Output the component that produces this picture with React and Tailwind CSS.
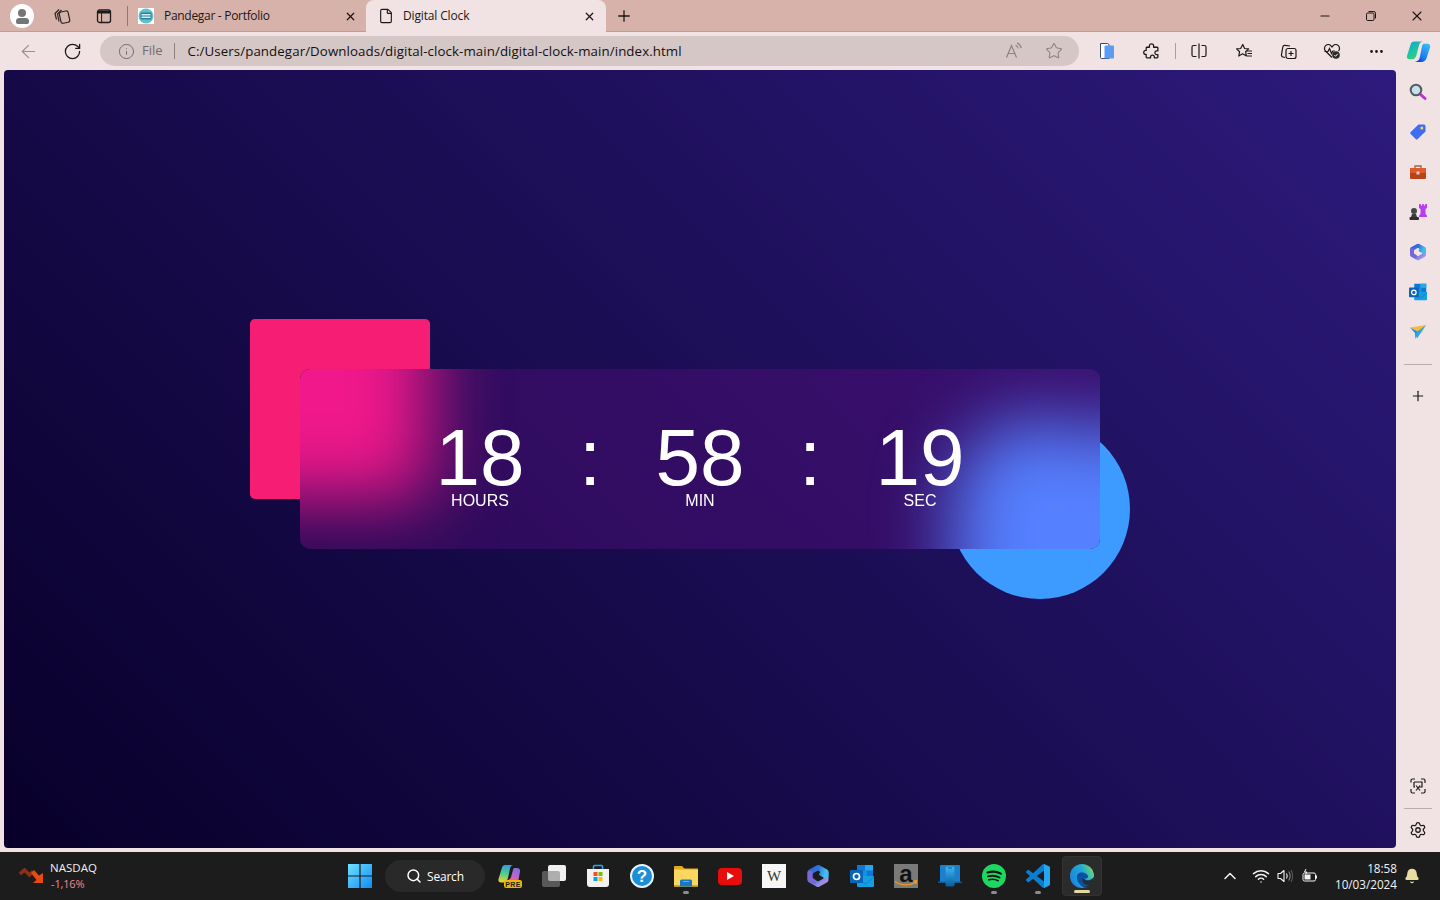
import React from 'react';
import { ArrowLeft, RotateCw, Info, Star, Plus, X, Minus, Search, ChevronUp, Wifi, Bell, File as FileIcon, Settings, MoreHorizontal } from 'lucide-react';

const uiFont = "font-['Open_Sans','Noto_Sans',sans-serif]";
const clockFont = "font-['Liberation_Sans',Arial,sans-serif]";

function Slot({ className = 'w-11 h-11', children }) {
  return <div className={`flex items-center justify-center shrink-0 ${className}`}>{children}</div>;
}

function Workspaces() {
  return (
    <svg width="18" height="18" viewBox="0 0 18 18" fill="none" stroke="#2b2625" strokeWidth="1.2">
      <path d="M3.5 12.5 2 6.5 6 2.5" />
      <path d="M6 14.5 4.5 7 8.5 3" />
      <rect x="7" y="4.5" width="9" height="11.5" rx="2" transform="rotate(-12 11 10)" />
    </svg>
  );
}

function TabActions() {
  return (
    <svg width="16" height="16" viewBox="0 0 16 16" fill="none">
      <rect x="1.5" y="2" width="13" height="12.5" rx="2" stroke="#1c1a1a" strokeWidth="1.3" />
      <path d="M2 3h12v2.5H2z" fill="#1c1a1a" />
      <path d="M5.6 5v9" stroke="#1c1a1a" strokeWidth="1" />
    </svg>
  );
}

function Favicon() {
  return (
    <div className="w-4 h-4 bg-white flex items-center justify-center">
      <svg width="16" height="16" viewBox="0 0 16 16">
        <circle cx="8" cy="8" r="7.5" fill="#5cc3c9" />
        <rect x="2.5" y="4.5" width="11" height="7" rx="1" fill="#2f7f9c" />
        <rect x="3.5" y="6" width="9" height="1.5" fill="#d7eef0" />
        <rect x="3.5" y="8.5" width="9" height="1.5" fill="#d7eef0" />
      </svg>
    </div>
  );
}

function RestoreIcon() {
  return (
    <svg width="10" height="10" viewBox="0 0 10 10" fill="none" stroke="#1b1515" strokeWidth="1">
      <rect x="0.5" y="2" width="7.5" height="7.5" rx="1.2" />
      <path d="M2.5 .5h5.2A1.8 1.8 0 0 1 9.5 2.3V7.5" />
    </svg>
  );
}

function ReadAloud() {
  return (
    <svg width="18" height="18" viewBox="0 0 18 18" fill="none" stroke="#8d8382" strokeWidth="1.2">
      <path d="M1.5 15.5 6.5 3.5l5 12M3.2 11.5h6.6" />
      <path d="M10.5 3.2c1.5.5 2.5 1.8 2.8 3.3M12 1c2.3.8 3.7 2.7 4.2 5" />
    </svg>
  );
}

function WalletIcon() {
  return (
    <svg width="16" height="18" viewBox="0 0 16 18">
      <path d="M1.5 1.5h7l1.5 1V16.5H2.5a1 1 0 0 1-1-1z" fill="#fff" stroke="#3c4a63" strokeWidth="1" />
      <rect x="5.5" y="3.5" width="9.5" height="13" rx="1" fill="#5b9bf3" />
    </svg>
  );
}

function PuzzleIcon() {
  return (
    <svg width="17" height="17" viewBox="0 0 16 16" fill="none" stroke="#1c1818" strokeWidth="1.2" strokeLinejoin="round">
      <path d="M6 2.8a2 2 0 0 1 4 0V4h3.2a.8.8 0 0 1 .8.8v2.7h-1.1a1.6 1.6 0 0 0 0 3.4H14v2.3a.8.8 0 0 1-.8.8h-2.5v-.8a1.8 1.8 0 0 0-3.6 0v.8H3.8a.8.8 0 0 1-.8-.8v-2.4h-.4a1.9 1.9 0 0 1 0-3.8H3V4.8a.8.8 0 0 1 .8-.8H6z" />
    </svg>
  );
}

function SplitIcon() {
  return (
    <svg width="16" height="16" viewBox="0 0 16 16" fill="none" stroke="#1c1818" strokeWidth="1.2">
      <path d="M8 .5v15" />
      <path d="M5.5 2.5h-3A1.5 1.5 0 0 0 1 4v8a1.5 1.5 0 0 0 1.5 1.5h3M10.5 2.5h3A1.5 1.5 0 0 1 15 4v8a1.5 1.5 0 0 1-1.5 1.5h-3" />
    </svg>
  );
}

function FavoritesIcon() {
  return (
    <svg width="17" height="17" viewBox="0 0 17 17" fill="none" stroke="#1c1818" strokeWidth="1.2" strokeLinejoin="round">
      <path d="M6.8 1.5 8.6 5.5l4 .4-3 2.8.8 4.3-3.8-2.2-3.8 2.2.8-4.3-3-2.8 4-.4z" />
      <path d="M11 8h5M11.5 10.5H16M11 13h5" />
    </svg>
  );
}

function CollectionsIcon() {
  return (
    <svg width="17" height="17" viewBox="0 0 17 17" fill="none" stroke="#1c1818" strokeWidth="1.2">
      <path d="M5 14.5 3 14a2 2 0 0 1-1.5-2.4L2.8 4A2 2 0 0 1 5 2.3l5 .7" />
      <rect x="6" y="5.5" width="10" height="10" rx="2" />
      <path d="M11 8v5M8.5 10.5h5" />
    </svg>
  );
}

function HealthIcon() {
  return (
    <svg width="18" height="18" viewBox="0 0 18 18" fill="none">
      <path d="M9 15.5 2.5 9A3.7 3.7 0 0 1 8 3.8L9 5l1-1.2A3.7 3.7 0 0 1 15.5 9" stroke="#1c1818" strokeWidth="1.2" />
      <path d="M1.5 9.5H5l1.5-3 2 5L9.8 9h2" stroke="#1c1818" strokeWidth="1.2" />
      <circle cx="13" cy="13" r="3.8" fill="#2a2a2a" />
      <path d="M11.3 13.1 12.5 14.3 14.8 11.8" stroke="#fff" strokeWidth="1" />
    </svg>
  );
}

function CopilotIcon() {
  return (
    <svg width="25" height="25" viewBox="0 0 24 24">
      <defs>
        <linearGradient id="cpA" x1="0" y1="0" x2="0.6" y2="1">
          <stop offset="0" stopColor="#1f9bd8" />
          <stop offset="0.6" stopColor="#1cc7a0" />
          <stop offset="1" stopColor="#38d070" />
        </linearGradient>
        <linearGradient id="cpB" x1="0.7" y1="0" x2="0.2" y2="1">
          <stop offset="0" stopColor="#35b8f6" />
          <stop offset="0.7" stopColor="#1a78ee" />
          <stop offset="1" stopColor="#1838c8" />
        </linearGradient>
      </defs>
      <path d="M8 2.5h8.500c-2 0-3.500 1.500-4 3.500L10 15.500c-.6 2.500-2.500 4-4.500 4h-2C1.500 19.500.3 18 1 16L4.500 5C5 3.500 6.300 2.500 8 2.500z" fill="url(#cpA)" />
      <path d="M17 4.500h3.500c2 0 3.200 1.500 2.600 3.500L19.500 19c-.6 2-2.500 3-4.500 3H8.500c2 0 3.800-1.500 4.500-3.500L15 9c.4-2 .8-4.500 2-4.500z" fill="url(#cpB)" />
    </svg>
  );
}

function Magnifier() {
  return (
    <svg width="18" height="18" viewBox="0 0 18 18">
      <path d="M10.5 10.5 16 15.5" stroke="#c72fd6" strokeWidth="3" strokeLinecap="round" />
      <circle cx="7" cy="7" r="5.3" fill="#c4dff0" stroke="#55595e" strokeWidth="2" />
    </svg>
  );
}

function TagIcon() {
  return (
    <svg width="18" height="18" viewBox="0 0 18 18">
      <path d="M9.5 1.5H15A1.5 1.5 0 0 1 16.5 3v5.500L8.700 16a1.500 1.500 0 0 1-2.100 0L1.700 11a1.500 1.500 0 0 1 0-2.100z" fill="#3f6cf0" />
      <circle cx="12.8" cy="5" r="1.5" fill="#f1d868" />
    </svg>
  );
}

function ToolboxIcon() {
  return (
    <svg width="18" height="16" viewBox="0 0 18 16">
      <path d="M6 4V2h6v2" fill="none" stroke="#8a6b5b" strokeWidth="1.3" />
      <rect x="1" y="4" width="16" height="11" rx="1.2" fill="#b8431a" />
      <rect x="1" y="4" width="16" height="5" rx="1" fill="#e2592a" />
      <rect x="7.5" y="7.5" width="3" height="3" rx=".5" fill="#d9d4d2" />
    </svg>
  );
}

function ChessIcon() {
  return (
    <svg width="20" height="18" viewBox="0 0 20 18">
      <circle cx="6" cy="8" r="3" fill="#45484b" />
      <path d="M4 11h4l1 3H3z" fill="#3a3c3f" />
      <rect x="1.5" y="14" width="9.5" height="3" rx="1" fill="#2d2f31" />
      <path d="M11 1h1.800v1.500h1.400V1h1.600v1.500h1.400V1H19v4l-1.500 1v5l1.500 1.500V14h-8v-1.500L12.500 11V6L11 5z" fill="#b63df0" />
    </svg>
  );
}

function M365Icon({ size = 18, hole = '#f1e3e3', id = 'm3' }) {
  return (
    <svg width={size} height={size} viewBox="0 0 24 24">
      <defs>
        <linearGradient id={`${id}A`} x1="0.1" y1="0" x2="0.9" y2="1">
          <stop offset="0" stopColor="#2f5fd8" />
          <stop offset="0.45" stopColor="#3d86e0" />
          <stop offset="1" stopColor="#b68ce6" />
        </linearGradient>
        <linearGradient id={`${id}B`} x1="0" y1="0" x2="1" y2="0.3">
          <stop offset="0" stopColor="#2c6bd8" />
          <stop offset="1" stopColor="#42bdec" />
        </linearGradient>
      </defs>
      <path d="M12 3.5 20 8v8l-8 4.500L4 16V8z" fill={hole} stroke={`url(#${id}A)`} strokeWidth="5" strokeLinejoin="round" />
      <path d="M12 3.5 20 8v4l-6-3.500" fill="none" stroke={`url(#${id}B)`} strokeWidth="5" strokeLinejoin="round" />
      <path d="M4 9v6l4 3" fill="none" stroke="#7a66d8" strokeWidth="5" strokeLinejoin="round" strokeLinecap="round" />
    </svg>
  );
}

function OutlookIcon({ size = 18 }) {
  return (
    <svg width={size} height={size} viewBox="0 0 24 24">
      <rect x="7" y="1" width="16" height="11" fill="#0f78d4" />
      <rect x="15" y="1" width="8" height="5.5" fill="#28a8ea" />
      <rect x="11" y="6.5" width="6" height="5.5" fill="#1a8fe0" />
      <path d="M7 12h17v10a1 1 0 0 1-1 1H8a1 1 0 0 1-1-1z" fill="#14a0e0" />
      <path d="M7 14l8.500 5L24 12v2l-8.500 7L7 16z" fill="#0f78d4" opacity=".5" />
      <rect x="0" y="6" width="13" height="13" rx="1" fill="#0a64b8" />
      <circle cx="6.5" cy="12.5" r="3" fill="none" stroke="#fff" strokeWidth="1.7" />
    </svg>
  );
}

function SendIcon() {
  return (
    <svg width="18" height="16" viewBox="0 0 18 16">
      <path d="M1 3.500 17 1 9.500 8z" fill="#f4bb3e" />
      <path d="M17 1 9.500 8 13 9.500z" fill="#f5d37d" />
      <path d="M1 3.500 6 9l.5 6L9.500 8z" fill="#1c8de0" />
      <path d="M17 1 8 14.500 6.500 9z" fill="#2da2ef" />
    </svg>
  );
}

function ScreenshotIcon() {
  return (
    <svg width="16" height="16" viewBox="0 0 16 16" fill="none" stroke="#1e1a1a" strokeWidth="1.2">
      <path d="M1 4.500V2.500A1.500 1.500 0 0 1 2.500 1H5M11 1h2.500A1.500 1.500 0 0 1 15 2.500V5M15 11v2.500a1.500 1.500 0 0 1-1.500 1.500H11M5 15H2.500A1.500 1.500 0 0 1 1 13.500V11" />
      <path d="M4 4h8v5H9M4 4v5h1" />
      <path d="M6 7.500l4 5M10 7.500l-4 5" />
    </svg>
  );
}

function TitleBar() {
  return (
    <div className="h-8 flex bg-[#d7b2ab] text-[#1c1616] shadow-[inset_0_-1px_0_#bf9c96]">
      <Slot className="w-11 h-8">
        <div className="w-6 h-6 rounded-full bg-white flex flex-col items-center justify-center gap-[1px]">
          <div className="w-2 h-2 rounded-full bg-[#757575]" />
          <div className="w-[13px] h-[6px] rounded-b-[3px] rounded-t-[4px] bg-[#757575]" />
        </div>
      </Slot>
      <Slot className="w-9 h-8"><Workspaces /></Slot>
      <Slot className="w-[47px] h-8"><TabActions /></Slot>
      <div className="w-px h-5 mt-[6px] bg-[#8f7773]" />
      <div className="w-[237px] h-8 flex items-center pl-[10px]">
        <Favicon />
        <span className={`ml-[10px] text-[12px] leading-none tracking-[-0.3px] ${uiFont}`}>Pandegar - Portfolio</span>
        <X className="ml-auto mr-[8px]" size={13} strokeWidth={2.2} />
      </div>
      <div className="w-[240px] h-8 ml-[1px] bg-[#f1e3e3] rounded-t-lg flex items-center pl-[12px]">
        <FileIcon size={16} strokeWidth={1.7} />
        <span className={`ml-[9px] text-[12px] leading-none tracking-[-0.15px] ${uiFont}`}>Digital Clock</span>
        <X className="ml-auto mr-[10px]" size={13} strokeWidth={2.2} />
      </div>
      <Slot className="w-9 h-8"><Plus size={18} strokeWidth={1.7} /></Slot>
      <div className="ml-auto flex">
        <Slot className="w-[46px] h-8"><Minus size={14} strokeWidth={1.9} /></Slot>
        <Slot className="w-[46px] h-8"><RestoreIcon /></Slot>
        <Slot className="w-[46px] h-8"><X size={16} strokeWidth={1.7} /></Slot>
      </div>
    </div>
  );
}

function Toolbar() {
  return (
    <div className="h-[38px] flex items-center bg-[#f1e3e3] text-[#1c1818]">
      <Slot className="w-[56px] h-8"><ArrowLeft className="text-[#9b9090]" size={21} strokeWidth={1.4} /></Slot>
      <Slot className="w-[32px] h-8"><RotateCw size={19} strokeWidth={1.6} /></Slot>
      <div className="ml-3 w-[979px] h-[30px] rounded-full bg-[#d4c7c6] flex items-center pl-[18px]">
        <Info className="text-[#746c6b]" size={17} strokeWidth={1.4} />
        <span className={`ml-[7px] text-[13px] text-[#736b6a] ${uiFont}`}>File</span>
        <div className="ml-[11px] w-px h-4 bg-[#8b8180]" />
        <span className={`ml-[13px] mt-[1px] text-[13.3px] tracking-[0.08px] text-[#141010] ${uiFont}`}>C:/Users/pandegar/Downloads/digital-clock-main/digital-clock-main/index.html</span>
        <div className="ml-auto flex items-center mr-[5px]">
          <Slot className="w-10 h-6"><ReadAloud /></Slot>
          <Slot className="w-10 h-6"><Star className="text-[#8d8382]" size={18} strokeWidth={1.4} /></Slot>
        </div>
      </div>
      <Slot className="ml-[6px] w-11 h-8"><WalletIcon /></Slot>
      <Slot className="w-11 mr-[2px] h-8"><PuzzleIcon /></Slot>
      <div className="w-px h-4 bg-[#a89e9d]" />
      <Slot className="w-[46px] h-8"><SplitIcon /></Slot>
      <Slot className="w-11 h-8"><FavoritesIcon /></Slot>
      <Slot className="w-11 h-8"><CollectionsIcon /></Slot>
      <Slot className="w-11 h-8"><HealthIcon /></Slot>
      <Slot className="w-11 h-8"><MoreHorizontal size={17} strokeWidth={2} /></Slot>
      <Slot className="w-[40px] h-8"><CopilotIcon /></Slot>
    </div>
  );
}

function TimeBox({ value, label }) {
  return (
    <div className={`w-[110px] flex flex-col items-center text-white ${clockFont}`}>
      <div className="text-[80px] leading-[68px]">{value}</div>
      <div className="text-[16px] leading-[18px]">{label}</div>
    </div>
  );
}

function Colon() {
  return <div className={`w-[110px] text-center text-white text-[80px] leading-[68px] ${clockFont}`}>:</div>;
}

function Stage() {
  return (
    <div className="flex-1 ml-1 mb-1 rounded flex items-center justify-center bg-[linear-gradient(45deg,#08002a,#2d1a7c)]">
      <div className="relative w-[800px] h-[180px]">
        <div className="absolute -left-[50px] -top-[50px] w-[180px] h-[180px] rounded-[5px] bg-[#f61e74]" />
        <div className="absolute -right-[30px] -bottom-[50px] w-[180px] h-[180px] rounded-full bg-[#3d9bff]" />
        {/* frosted glass: the shapes are repeated blurred inside the clipped panel */}
        <div className="absolute inset-0 rounded-[10px] overflow-hidden bg-[linear-gradient(45deg,#2c0a58,#3a1070)]">
          <div className="absolute inset-0 blur-[36px]">
            <div className="absolute -left-[130px] -top-[130px] w-[260px] h-[260px] bg-[#f0188a]" />
            <div className="absolute left-[650px] top-[50px] w-[180px] h-[180px] rounded-full bg-[#5580ff]" />
            <div className="absolute left-[770px] top-[50px] w-[180px] h-[180px] rounded-full bg-[#5580ff]" />
            <div className="absolute left-[650px] top-[130px] w-[180px] h-[180px] rounded-full bg-[#5580ff]" />
            <div className="absolute left-[770px] top-[130px] w-[180px] h-[180px] rounded-full bg-[#5580ff]" />
          </div>
          <div className="relative flex justify-center pt-[55px]">
            <TimeBox value="18" label="HOURS" />
            <Colon />
            <TimeBox value="58" label="MIN" />
            <Colon />
            <TimeBox value="19" label="SEC" />
          </div>
        </div>
      </div>
    </div>
  );
}

function SideBar() {
  return (
    <div className="w-11 flex flex-col items-center bg-[#f1e3e3] pt-[2px] pb-[1px]">
      <Slot className="w-10 h-10"><Magnifier /></Slot>
      <Slot className="w-10 h-10"><TagIcon /></Slot>
      <Slot className="w-10 h-10"><ToolboxIcon /></Slot>
      <Slot className="w-10 h-10"><ChessIcon /></Slot>
      <Slot className="w-10 h-10"><M365Icon id="m3s" /></Slot>
      <Slot className="w-10 h-10"><OutlookIcon /></Slot>
      <Slot className="w-10 h-10"><SendIcon /></Slot>
      <div className="w-7 h-px bg-[#b9aeae] mt-[12px]" />
      <Slot className="w-10 h-10 mt-[11px]"><Plus size={16} strokeWidth={1.8} className="text-[#1e1a1a]" /></Slot>
      <div className="mt-auto flex flex-col items-center">
        <Slot className="w-10 h-10 -mt-[1px]"><ScreenshotIcon /></Slot>
        <div className="w-7 h-px bg-[#b9aeae] mt-[2px]" />
        <Slot className="w-10 h-10 mt-[1px] mb-[1px]"><Settings size={18} strokeWidth={1.7} className="text-[#1e1a1a]" /></Slot>
      </div>
    </div>
  );
}

function WinLogo() {
  return (
    <svg width="24" height="24" viewBox="0 0 24 24">
      <defs>
        <linearGradient id="winA" x1="0" y1="0" x2="1" y2="1">
          <stop offset="0" stopColor="#6fe0ff" />
          <stop offset="1" stopColor="#0f8cf5" />
        </linearGradient>
      </defs>
      <path d="M0 0h11.400v11.400H0zM12.600 0H24v11.400H12.600zM0 12.600h11.400V24H0zM12.600 12.600H24V24H12.600z" fill="url(#winA)" />
    </svg>
  );
}

function CopilotPre() {
  return (
    <div className="relative w-6 h-6">
      <svg width="24" height="24" viewBox="0 0 24 24">
        <defs>
          <linearGradient id="preA" x1="0.4" y1="0" x2="0.3" y2="1">
            <stop offset="0" stopColor="#2f9fe8" />
            <stop offset=".5" stopColor="#4fd08a" />
            <stop offset="1" stopColor="#f4d030" />
          </linearGradient>
          <linearGradient id="preB" x1="0.8" y1="0" x2="0.2" y2="1">
            <stop offset="0" stopColor="#7a6fe8" />
            <stop offset="1" stopColor="#e85fb0" />
          </linearGradient>
        </defs>
        <path d="M7 1h8.500c-2 0-3 1.500-3.500 3.500L10 14c-.5 2.500-2.500 4.500-4.500 4.500H3C1 18.500 0 17 .5 15L4 3.500C4.500 2 5.500 1 7 1z" fill="url(#preA)" />
        <path d="M16 4h3c2 0 3.500 1.500 3 3.500L20.500 16H10c1.500-.5 2.500-1.500 3-3L15 6c.2-1 .5-2 1-2z" fill="url(#preB)" />
      </svg>
      <div className={`absolute right-0 bottom-0 w-[18px] h-[8px] rounded-[2px] bg-[#f4b400] flex items-center justify-center text-[7px] leading-none font-bold tracking-[0.3px] text-[#222] ${clockFont}`}>PRE</div>
    </div>
  );
}

function TaskView() {
  return (
    <div className="relative w-6 h-[22px]">
      <div className="absolute right-0 top-0 w-[18px] h-[16px] rounded-[2px] bg-[#f0f0f0]" />
      <div className="absolute left-0 bottom-0 w-[18px] h-[16px] rounded-[2px] bg-[rgba(130,130,130,0.6)]" />
    </div>
  );
}

function StoreIcon() {
  return (
    <svg width="24" height="24" viewBox="0 0 24 24">
      <path d="M7.500 6V2.500a1 1 0 0 1 1-1h7a1 1 0 0 1 1 1V6" fill="none" stroke="#2aa4f0" strokeWidth="1.6" />
      <path d="M1 5h22v15a3 3 0 0 1-3 3H4a3 3 0 0 1-3-3z" fill="#f2f2f2" />
      <rect x="7.5" y="8" width="4" height="4" fill="#f25022" />
      <rect x="12.5" y="8" width="4" height="4" fill="#7fba00" />
      <rect x="7.5" y="13" width="4" height="4" fill="#00a4ef" />
      <rect x="12.5" y="13" width="4" height="4" fill="#ffb900" />
    </svg>
  );
}

function HelpIcon() {
  return (
    <div className={`w-6 h-6 rounded-full bg-[#1a8fd8] border-2 border-[#e8f3fa] flex items-center justify-center text-white text-[17px] font-bold leading-none ${clockFont}`}>?</div>
  );
}

function FolderIcon() {
  return (
    <svg width="24" height="24" viewBox="0 0 24 24">
      <path d="M0 3a1 1 0 0 1 1-1h7l2.500 2.500H24V22H0z" fill="#e0a91e" />
      <rect x="0" y="5.5" width="24" height="17" fill="#fbd75f" />
      <rect x="0" y="21" width="24" height="1.5" fill="#e0a91e" />
      <path d="M6 17a1.500 1.500 0 0 1 1.500-1.500h9A1.500 1.500 0 0 1 18 17v5.500H6z" fill="#1878c8" />
      <rect x="9" y="17" width="6" height="1" fill="#5fb0ea" />
    </svg>
  );
}

function YouTubeIcon() {
  return (
    <div className="w-6 h-[17px] rounded-[4px] bg-[#e80d0d] flex items-center justify-center">
      <div className="ml-[1px] w-0 h-0 border-y-[4px] border-y-transparent border-l-[7px] border-l-white" />
    </div>
  );
}

function WikiIcon() {
  return <div className="w-6 h-6 bg-[#f6f6f6] flex items-center justify-center text-[#333] text-[15px] leading-none font-['Liberation_Serif',serif]">W</div>;
}

function AmazonIcon() {
  return (
    <div className={`relative w-6 h-6 bg-[#7a7a7a] flex justify-center text-[#111] text-[24px] leading-[20px] font-bold ${clockFont}`}>
      a
      <svg className="absolute left-0 bottom-[1px]" width="24" height="7" viewBox="0 0 24 7" fill="none" stroke="#f59a1c" strokeWidth="1.3">
        <path d="M1 1.500c6 4.500 15 4.500 21 .5M19.500 1h3l-.5 3" />
      </svg>
    </div>
  );
}

function PhoneLinkIcon() {
  return (
    <svg width="24" height="24" viewBox="0 0 24 24">
      <defs>
        <linearGradient id="plA" x1="0" y1="0" x2="0" y2="1">
          <stop offset="0" stopColor="#3ab8f0" />
          <stop offset="1" stopColor="#0a5a9e" />
        </linearGradient>
      </defs>
      <rect x="2" y="1" width="20" height="18" rx="1" fill="#1a7fcc" />
      <rect x="0" y="17.5" width="24" height="1.5" rx=".7" fill="#0d5f9c" />
      <rect x="7.5" y="2.5" width="9" height="20" rx="1.5" fill="url(#plA)" />
      <rect x="10" y="3.5" width="4" height="1" fill="#0d5f9c" />
    </svg>
  );
}

function SpotifyIcon() {
  return (
    <svg width="24" height="24" viewBox="0 0 24 24" fill="none" stroke="#111" strokeLinecap="round">
      <circle cx="12" cy="12" r="12" fill="#1ed760" stroke="none" />
      <path d="M5.500 8.500c4.500-1.300 9.500-1 13.300 1.100" strokeWidth="2.2" />
      <path d="M6 12.300c4-1 8-.7 11.500 1.200" strokeWidth="1.9" />
      <path d="M6.800 15.700c3.300-.8 6.500-.5 9.400 1" strokeWidth="1.6" />
    </svg>
  );
}

function VSCodeIcon() {
  return (
    <svg width="24" height="24" viewBox="0 0 24 24">
      <path d="M23.150 2.587 18.210.21a1.494 1.494 0 0 0-1.705.29l-9.460 8.630-4.120-3.128a.999.999 0 0 0-1.276.057L.327 7.261A1 1 0 0 0 .326 8.740L3.899 12 .326 15.260a1 1 0 0 0 .001 1.479L1.650 17.940a.999.999 0 0 0 1.276.057l4.120-3.128 9.460 8.630a1.492 1.492 0 0 0 1.704.29l4.942-2.377A1.500 1.500 0 0 0 24 20.060V3.939a1.500 1.500 0 0 0-.85-1.352zm-5.146 14.861L10.826 12l7.178-5.448v10.896z" fill="#0a7dcf" />
      <path d="M18 .1 23.150 2.587A1.500 1.500 0 0 1 24 3.939V20.060a1.500 1.500 0 0 1-.85 1.352L18 23.900z" fill="#22a7f0" />
    </svg>
  );
}

function EdgeIcon() {
  return (
    <svg width="24" height="24" viewBox="0 0 24 24">
      <defs>
        <linearGradient id="edA" x1="0" y1="0.6" x2="1" y2="0.2">
          <stop offset="0" stopColor="#1a86e0" />
          <stop offset="0.55" stopColor="#21a8d8" />
          <stop offset="1" stopColor="#76dc62" />
        </linearGradient>
      </defs>
      <circle cx="12" cy="12" r="12" fill="url(#edA)" />
      <path d="M24 13c-2 2.500-5 3.500-7.500 3-1.500-.3-2.500-1-3-2 2 1 4 .5 4.500-1 .5-2-2.500-4.500-6-4.500C8 8.500 6.500 11 7 14.500 7.800 19 11 22.500 15 23.800c5-1 8.500-5.500 9-10.800z" fill="#0c4f9e" />
      <path d="M13.500 14c.7 1.500 2 2.500 4 2.700 2.500.2 5-1 6.500-3.700 0 4-2 8-5.500 9.500-2 .8-3.500 1-5 .6 2.500-.3 4.500-1.200 5.500-2.600-2.500.8-5.500-.5-6.500-3.500-.2-1 .1-2.200 1-3z" fill="#2b2b2b" />
    </svg>
  );
}

function Dot({ active }) {
  return <div className={`absolute left-1/2 -translate-x-1/2 h-[3px] rounded-full ${active ? 'bottom-[2px] w-4 bg-[#e5d7a0]' : 'bottom-[4px] w-[6px] bg-[#8c8c8c]'}`} />;
}

function TaskItem({ children, running }) {
  return (
    <div className="relative w-11 h-11 flex items-center justify-center">
      {children}
      {running && <Dot />}
    </div>
  );
}

function ActiveTaskItem({ children }) {
  return (
    <div className="relative w-10 h-10 mx-[2px] mt-[2px] rounded bg-[#2b2b2b] border border-[#333] flex items-center justify-center">
      {children}
      <Dot active />
    </div>
  );
}

function SpeakerIcon() {
  return (
    <svg width="16" height="16" viewBox="0 0 16 16" fill="none" stroke="#f3f3f3" strokeWidth="1.1">
      <path d="M1 5.500h2.500L7 2.500v11l-3.500-3H1z" strokeLinejoin="round" />
      <path d="M9.500 5.500c.9 1.500.9 3.500 0 5" />
      <path d="M11.800 3.500c1.600 2.700 1.600 6.300 0 9" stroke="#8a8a8a" />
      <path d="M14 2c2 3.700 2 8.300 0 12" stroke="#555" />
    </svg>
  );
}

function BatteryIcon() {
  return (
    <svg width="16" height="16" viewBox="0 0 16 16" fill="none" stroke="#f3f3f3" strokeWidth="1">
      <rect x="1" y="5" width="12.5" height="8" rx="1.5" />
      <path d="M14.500 7.500v3" />
      <rect x="2.5" y="6.5" width="6" height="5" fill="#f3f3f3" stroke="none" />
      <path d="M4 1 2.500 4h2.300L3.500 6.500" />
    </svg>
  );
}

function TaskBar() {
  return (
    <div className={`h-12 bg-[#1c1c1c] flex items-center text-white ${uiFont}`}>
      <div className="w-[338px] flex items-center pl-[19px]">
        <svg width="25" height="17" viewBox="0 0 25 17">
          <path d="M1 6 5.500 2 10.500 7 14 3.500" fill="none" stroke="#8f2f18" strokeWidth="3.5" />
          <path d="M12 5 15 2 20 7.500 24 5V15H14L17.500 12z" fill="#e84a12" />
        </svg>
        <div className="ml-[6px] flex flex-col">
          <span className="text-[11.5px] leading-[16px] tracking-[0.03px] text-[#f0f0f0]">NASDAQ</span>
          <span className="text-[11px] leading-[16px] tracking-[-0.15px] text-[#f08a96] ml-[1px]">-1,16%</span>
        </div>
      </div>
      <TaskItem><WinLogo /></TaskItem>
      <div className="w-[100px] h-8 ml-[3px] rounded-full bg-[#292929] flex items-center pl-[21px]">
        <Search size={16} strokeWidth={2.2} />
        <span className="ml-[5px] mt-[2px] text-[12px] tracking-[-0.2px]">Search</span>
      </div>
      <div className="ml-[3px] flex">
        <TaskItem><CopilotPre /></TaskItem>
        <TaskItem><TaskView /></TaskItem>
        <TaskItem><StoreIcon /></TaskItem>
        <TaskItem><HelpIcon /></TaskItem>
        <TaskItem running><FolderIcon /></TaskItem>
        <TaskItem><YouTubeIcon /></TaskItem>
        <TaskItem><WikiIcon /></TaskItem>
        <TaskItem><M365Icon size={24} hole="#1c1c1c" id="m3t" /></TaskItem>
        <TaskItem><OutlookIcon size={24} /></TaskItem>
        <TaskItem><AmazonIcon /></TaskItem>
        <TaskItem><PhoneLinkIcon /></TaskItem>
        <TaskItem running><SpotifyIcon /></TaskItem>
        <TaskItem running><VSCodeIcon /></TaskItem>
        <ActiveTaskItem><EdgeIcon /></ActiveTaskItem>
      </div>
      <div className="ml-auto flex items-center text-[#f3f3f3]">
        <ChevronUp size={20} strokeWidth={1.8} />
        <Wifi className="ml-[12px]" size={18} strokeWidth={2} />
        <div className="ml-[7px]"><SpeakerIcon /></div>
        <div className="ml-[9px]"><BatteryIcon /></div>
        <div className="ml-[17px] flex flex-col items-end text-[11.7px] leading-[16px]">
          <span>18:58</span>
          <span>10/03/2024</span>
        </div>
        <Bell className="ml-[7px] mr-[20px] text-[#e9dca0]" size={16} fill="#e9dca0" />
      </div>
    </div>
  );
}

export default function App() {
  return (
    <div className="w-screen h-screen overflow-hidden flex flex-col bg-[#f1e3e3]">
      <TitleBar />
      <Toolbar />
      <div className="flex-1 flex min-h-0">
        <Stage />
        <SideBar />
      </div>
      <TaskBar />
    </div>
  );
}
